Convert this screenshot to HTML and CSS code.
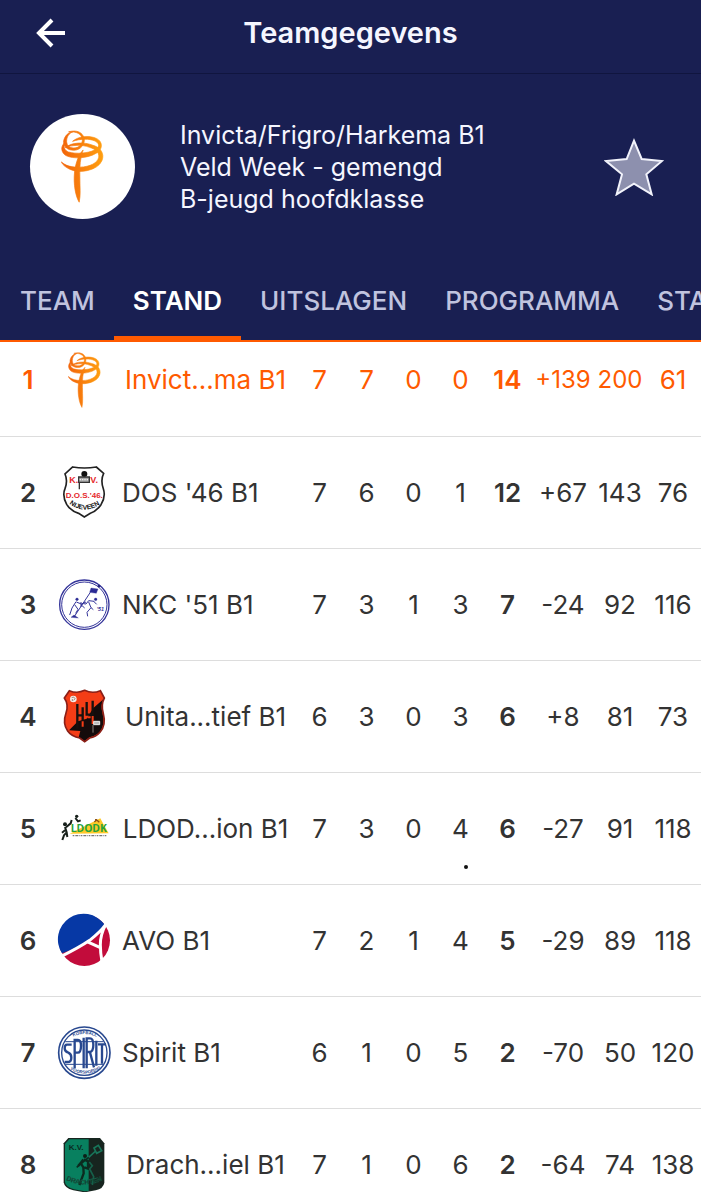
FILE: index.html
```html
<!DOCTYPE html>
<html lang="nl">
<head>
    <meta charset="UTF-8">
    <meta name="viewport" content="width=device-width, initial-scale=1.0">
    <title>Teamgegevens</title>
    <link rel="stylesheet" href="styles.css">
</head>
<body>
    <svg class="defs" aria-hidden="true">
        <defs>
            <linearGradient id="flame" x1="183" y1="0" x2="313" y2="0" gradientUnits="userSpaceOnUse">
                <stop offset="0" stop-color="#f2640a"/>
                <stop offset="1" stop-color="#ffa010"/>
            </linearGradient>
            <symbol id="invicta" viewBox="183 388 130 220">
                <g fill="url(#flame)" stroke="url(#flame)" stroke-width="2">
                    <path d="M206 393C233 386 248 396 253 412C257 430 242 449 222 449C203 449 189 438 191 420C195 404 206 394 219 393C207 398 200 408 200 422C201 436 208 442 222 442C239 442 250 429 247 413C243 400 232 392 206 393Z"/>
                    <path d="M218 422C234 407 267 403 290 413C309 422 311 445 291 457C264 474 220 476 198 465C184 456 180 439 194 426C190 442 195 449 205 454C230 461 262 458 283 449C300 441 301 429 286 421C268 413 241 414 218 422Z"/>
                    <path d="M196 441C215 424 254 424 277 433C304 440 315 460 307 480C294 511 238 520 211 507C198 501 188 494 184 484C196 496 217 501 240 500C271 499 294 487 297 470C299 455 287 446 269 440C246 431 216 433 196 441Z"/>
                    <path d="M250 448C241 470 239 500 240 528C240 560 243 584 238 606C227 588 220 552 224 514C228 484 237 461 250 448Z"/>
                </g>
            </symbol>
        </defs>
    </svg>

    <div class="app">
        <header class="header">
            <div class="title-bar">
                <button type="button" class="back-button" aria-label="Terug">
                    <svg width="30" height="30" viewBox="0 0 30 30" fill="none" stroke="#fff" stroke-width="4">
                        <path d="M16 2L3 15L16 28M3 15H29"/>
                    </svg>
                </button>
                <h1>Teamgegevens</h1>
            </div>

            <div class="team-info">
                <div class="team-badge">
                    <svg width="43" height="73"><use href="#invicta"/></svg>
                </div>
                <p>Invicta/Frigro/Harkema B1<br>Veld Week - gemengd<br>B-jeugd hoofdklasse</p>
                <button type="button" class="favorite-button" aria-label="Favoriet">
                    <svg width="60" height="58" viewBox="761 411 180 174" fill="#8d90ae" stroke="#f2f3fb" stroke-width="6">
                        <path d="M851 419L874 474L935 480L888 520L904 580L851 548L799 580L815 520L767 480L829 474Z"/>
                    </svg>
                </button>
            </div>

            <nav class="tabs">
                <a href="#">TEAM</a>
                <a href="#" class="active">STAND</a>
                <a href="#">UITSLAGEN</a>
                <a href="#">PROGRAMMA</a>
                <a href="#">STATS</a>
            </nav>
        </header>

        <table class="standings">
            <colgroup>
                <col class="col-rank">
                <col class="col-logo">
                <col>
                <col class="col-num" span="5">
                <col class="col-diff">
                <col class="col-for">
                <col class="col-against">
            </colgroup>
            <tbody>
                <tr class="current">
                    <td class="bold">1</td>
                    <td><svg width="33" height="56"><use href="#invicta"/></svg></td>
                    <td class="name short">Invict...ma B1</td>
                    <td>7</td><td>7</td><td>0</td><td>0</td>
                    <td class="bold">14</td>
                    <td class="small">+139</td><td class="small">200</td><td>61</td>
                </tr>
                <tr>
                    <td class="bold">2</td>
                    <td>
                        <svg width="56" height="56" viewBox="18 27 168 168">
                            <path d="M68 36Q103 42 139 36L161 55Q151 75 160 101Q168 125 153 149Q140 168 121 175L103 186L86 175Q61 167 50 148Q36 122 45 101Q54 77 45 57Z" fill="#fff" stroke="#222" stroke-width="5"/>
                            <circle cx="103" cy="57" r="9" fill="#111"/>
                            <path d="M86 66H118V82H86ZM88 82V103" fill="#aaa" stroke="#333" stroke-width="4"/>
                            <path d="M89 74H115" stroke="#eee" stroke-width="4" stroke-dasharray="4 3"/>
                            <g fill="#e5282c" font-family="Liberation Sans Narrow, Liberation Sans" font-weight="bold">
                                <text x="58" y="83" font-size="27">K.</text>
                                <text x="121" y="83" font-size="27">V.</text>
                                <text x="103" y="130" font-size="24" text-anchor="middle">D.O.S.'46.</text>
                            </g>
                            <path id="dosArc" d="M58 146Q103 182 152 146" fill="none"/>
                            <text fill="#111" font-family="Liberation Sans" font-size="20" font-weight="bold"><textPath href="#dosArc">NIJEVEEN</textPath></text>
                        </svg>
                    </td>
                    <td class="name">DOS '46 B1</td>
                    <td>7</td><td>6</td><td>0</td><td>1</td>
                    <td class="bold">12</td>
                    <td>+67</td><td>143</td><td>76</td>
                </tr>
                <tr>
                    <td class="bold">3</td>
                    <td>
                        <svg width="56" height="56" viewBox="18 18 168 168" fill="none" stroke="#34349a">
                            <circle cx="103" cy="104" r="74" stroke-width="4"/>
                            <circle cx="103" cy="104" r="68" stroke-width="3"/>
                            <path d="M123 54L144 57L139 70L119 67Z" fill="#2b2b94"/>
                            <circle cx="147" cy="48" r="4" fill="#222277"/>
                            <path d="M121 67L74 138" stroke-width="3"/>
                            <path d="M63 142L72 135L85 144Z" fill="#2b2b94"/>
                            <circle cx="81" cy="88" r="4" fill="#2b2b94"/>
                            <circle cx="137" cy="88" r="4" fill="#2b2b94"/>
                            <path d="M78 95L66 114L59 135M74 104L84 118L77 130M79 96L94 102L108 96M133 94L116 92L108 102L100 101M116 96L123 113L111 127L113 139M123 113L130 119M131 94L140 103M93 96V111M100 98L94 105L104 114" stroke-width="3"/>
                            <text x="140" y="124" fill="#34349a" stroke="none" font-family="Liberation Sans" font-size="16" font-style="italic" font-weight="bold">'51</text>
                        </svg>
                    </td>
                    <td class="name">NKC '51 B1</td>
                    <td>7</td><td>3</td><td>1</td><td>3</td>
                    <td class="bold">7</td>
                    <td>-24</td><td>92</td><td>116</td>
                </tr>
                <tr>
                    <td class="bold">4</td>
                    <td>
                        <svg width="56" height="56" viewBox="18 24 168 168">
                            <path d="M58 32Q82 42 104 31Q127 42 151 32L163 54Q152 74 160 101Q169 134 150 157Q138 171 119 174L104 185L89 174Q65 170 53 153Q37 130 48 99Q57 74 43 54Z" fill="#f43d16"/>
                            <path d="M161 57Q150 75 158 101Q166 134 150 155Q138 168 118 172L104 183L86 172L91 153L57 151L84 124L110 116L130 84Z" fill="#140b0b"/>
                            <path d="M58 32Q82 42 104 31Q127 42 151 32L163 54Q152 74 160 101Q169 134 150 157Q138 171 119 174L104 185L89 174Q65 170 53 153Q37 130 48 99Q57 74 43 54Z" fill="none" stroke="#8b1f17" stroke-width="5"/>
                            <path d="M82 72V146M82 106H98M98 82V122M110 66V104H126M128 62V110" fill="none" stroke="#17100e" stroke-width="7"/>
                            <path d="M98 124V140M112 112H122M128 108V132" fill="none" stroke="#f43d16" stroke-width="6"/>
                            <circle cx="70" cy="57" r="10" fill="#f5ece9"/>
                            <path d="M65 53L71 51L75 56L71 61M67 57V63" fill="none" stroke="#654" stroke-width="2"/>
                            <path d="M131 124H149V134H131Z" fill="#bbb" stroke="#eee" stroke-width="3"/>
                            <path d="M129 135V158" stroke="#8a817d" stroke-width="3"/>
                        </svg>
                    </td>
                    <td class="name short">Unita...tief B1</td>
                    <td>6</td><td>3</td><td>0</td><td>3</td>
                    <td class="bold">6</td>
                    <td>+8</td><td>81</td><td>73</td>
                </tr>
                <tr>
                    <td class="bold">5</td>
                    <td>
                        <svg width="56" height="56" viewBox="18 0 168 168">
                            <path d="M59 101L151 55L160 72L176 100Z" fill="#ffc928"/>
                            <text x="62" y="97" fill="#26a33c" font-family="Open Sans" font-size="31" font-weight="bold">LDODK</text>
                            <g fill="none" stroke="#17201b" stroke-width="6">
                                <path d="M45 81L50 97L42 106L37 120M50 97L52 111M48 82L62 70L65 60M36 98L45 91M76 54L84 64L92 61"/>
                            </g>
                            <circle cx="45" cy="73" r="6" fill="#17201b"/>
                            <circle cx="80" cy="49" r="5" fill="#17201b"/>
                            <path d="M133 66L140 60L148 67M137 62V57" stroke="#8f5319" stroke-width="4" fill="none"/>
                            <path d="M68 107H169" stroke="#777" stroke-width="4" stroke-dasharray="5 3 8 2 3 3"/>
                        </svg>
                    </td>
                    <td class="name short">LDOD...ion B1</td>
                    <td>7</td><td>3</td><td>0</td>
                    <td class="marked">4</td>
                    <td class="bold">6</td>
                    <td>-27</td><td>91</td><td>118</td>
                </tr>
                <tr>
                    <td class="bold">6</td>
                    <td>
                        <svg width="56" height="56" viewBox="18 21 168 168">
                            <circle cx="103" cy="106" r="77" fill="#c20c3b"/>
                            <path d="M36 145A77 77 0 0 1 163 58Q148 82 121 101Q88 126 36 145Z" fill="#0638a5"/>
                            <path d="M34 154Q87 128 119 106Q150 82 167 59Q151 89 151 119Q151 143 156 170" fill="none" stroke="#fff" stroke-width="9"/>
                            <path d="M111 110L151 128" stroke="#fff" stroke-width="9"/>
                        </svg>
                    </td>
                    <td class="name">AVO B1</td>
                    <td>7</td><td>2</td><td>1</td><td>4</td>
                    <td class="bold">5</td>
                    <td>-29</td><td>89</td><td>118</td>
                </tr>
                <tr>
                    <td class="bold">7</td>
                    <td>
                        <svg width="56" height="56" viewBox="18 18 168 168" fill="none" stroke="#28488f">
                            <circle cx="103" cy="104" r="77" stroke-width="5"/>
                            <circle cx="103" cy="104" r="68" stroke-width="4"/>
                            <path d="M46 71H160M46 139H160" stroke-width="3"/>
                            <g stroke-width="7">
                                <path d="M65 80H51Q44 80 44 91Q44 101 55 104Q64 108 64 119Q64 132 52 132H44M74 151V66H84Q93 66 93 83Q93 104 83 104H75M101 59V151M110 151V61H120Q130 61 130 81Q130 101 119 102H111M120 103L132 148M139 68V143M144 79H168M156 79V137"/>
                            </g>
                            <path id="spiritTop" d="M70 56Q103 40 138 56" stroke="none"/>
                            <path id="spiritBottom" d="M61 154Q103 180 149 154" stroke="none"/>
                            <g fill="#28488f" stroke="none" font-family="Liberation Sans" font-size="13" font-weight="bold">
                                <text><textPath href="#spiritTop">KORFBALL</textPath></text>
                                <text><textPath href="#spiritBottom">VOORSPOEDIG</textPath></text>
                            </g>
                        </svg>
                    </td>
                    <td class="name">Spirit B1</td>
                    <td>6</td><td>1</td><td>0</td><td>5</td>
                    <td class="bold">2</td>
                    <td>-70</td><td>50</td><td>120</td>
                </tr>
                <tr>
                    <td class="bold">8</td>
                    <td>
                        <svg width="56" height="56" viewBox="18 18 168 168">
                            <path d="M55 24H150L163 40V158Q160 176 137 181L104 187L70 181Q43 174 41 157V40Z" fill="#17251f"/>
                            <path d="M58 28H116V183L104 184L72 178Q47 172 45 156V42Z" fill="#08805f"/>
                            <path d="M132 54L145 46L155 62L140 70Z" fill="none" stroke="#18765a" stroke-width="5"/>
                            <path d="M137 63L116 82" stroke="#18765a" stroke-width="5"/>
                            <path d="M116 82L80 112" stroke="#0b2c20" stroke-width="5"/>
                            <circle cx="105" cy="78" r="6" fill="#0c1f18"/>
                            <path d="M100 88L92 99L100 112L101 130L88 165M102 88L114 94V116L103 112M92 99L84 108" fill="none" stroke="#0c2a1f" stroke-width="7"/>
                            <path d="M118 96L127 107L119 117L131 140L127 165" fill="none" stroke="#15604a" stroke-width="5"/>
                            <text x="56" y="61" fill="#0a2a1f" font-family="Liberation Sans" font-size="24" font-weight="bold">K.V.</text>
                            <path id="drachtenArc" d="M48 150Q103 176 160 150" fill="none"/>
                            <text fill="#0a2a1f" stroke="#1b6b52" stroke-width="1" font-family="Liberation Sans" font-size="20" font-weight="bold"><textPath href="#drachtenArc">DRACHTEN</textPath></text>
                        </svg>
                    </td>
                    <td class="name short">Drach...iel B1</td>
                    <td>7</td><td>1</td><td>0</td><td>6</td>
                    <td class="bold">2</td>
                    <td>-64</td><td>74</td><td>138</td>
                </tr>
            </tbody>
        </table>
    </div>
</body>
</html>
```
FILE: styles.css
```css
* {
    margin: 0;
    padding: 0;
    box-sizing: border-box;
}

body {
    font-family: Inter, 'Open Sans', sans-serif;
    font-size: 26px;
    color: #333;
    background: #fff;
}

button {
    background: none;
    border: none;
    cursor: pointer;
}

svg {
    display: block;
}

.defs {
    position: absolute;
    width: 0;
    height: 0;
}

.app {
    height: 100vh;
    overflow: hidden;
}

.header {
    position: relative;
    z-index: 1;
    background: #191f52;
    color: #f5f6ff;
}

.title-bar {
    display: grid;
    grid-template-columns: 66px 1fr 66px;
    align-items: center;
    height: 74px;
    padding-bottom: 8px;
    border-bottom: 1px solid #10153f;
}

.back-button {
    justify-self: end;
}

.title-bar h1 {
    font-size: 29px;
    font-weight: 600;
    line-height: 32px;
    text-align: center;
}

.team-info {
    display: flex;
    align-items: center;
    gap: 45px;
    padding: 40px 37px 44px 30px;
}

.team-badge {
    display: flex;
    align-items: center;
    justify-content: center;
    width: 105px;
    height: 105px;
    border-radius: 50%;
    background: #fff;
}

.team-info p {
    flex: 1;
    font-size: 25px;
    line-height: 32px;
}

.tabs {
    display: flex;
    height: 79px;
    border-bottom: 2px solid #ff5a00;
    overflow: hidden;
    white-space: nowrap;
}

.tabs a {
    padding: 22px 19px 0 20px;
    border-bottom: 4px solid transparent;
    line-height: 32px;
    font-weight: 500;
    color: #c0c3df;
    text-decoration: none;
}

.tabs a + a {
    padding-left: 19px;
}

.tabs a.active {
    border-color: #ff5a00;
    font-weight: 600;
    color: #fff;
}

/* the list is scrolled slightly under the header */
.standings {
    width: 100%;
    margin-top: -18px;
    table-layout: fixed;
    border-collapse: collapse;
}

.col-rank,
.col-logo {
    width: 56px;
}

.col-num {
    width: 47px;
}

.col-diff {
    width: 64px;
}

.col-for {
    width: 50px;
}

.col-against {
    width: 56px;
}

.standings td {
    height: 112px;
    border-bottom: 1px solid #ddd;
    text-align: center;
    vertical-align: middle;
    white-space: nowrap;
}

.standings td svg {
    margin: 0 auto;
}

.standings td.name {
    padding-left: 10px;
    text-align: left;
}

.standings td.short {
    padding-right: 7px;
    text-align: center;
}

.standings .bold {
    font-weight: 600;
}

.standings .current {
    color: #ff5a00;
}

.standings .small {
    font-size: 24px;
}

.marked {
    position: relative;
}

.marked::after {
    content: '';
    position: absolute;
    right: 16px;
    bottom: 15px;
    width: 4px;
    height: 4px;
    border-radius: 50%;
    background: #111;
}
```
